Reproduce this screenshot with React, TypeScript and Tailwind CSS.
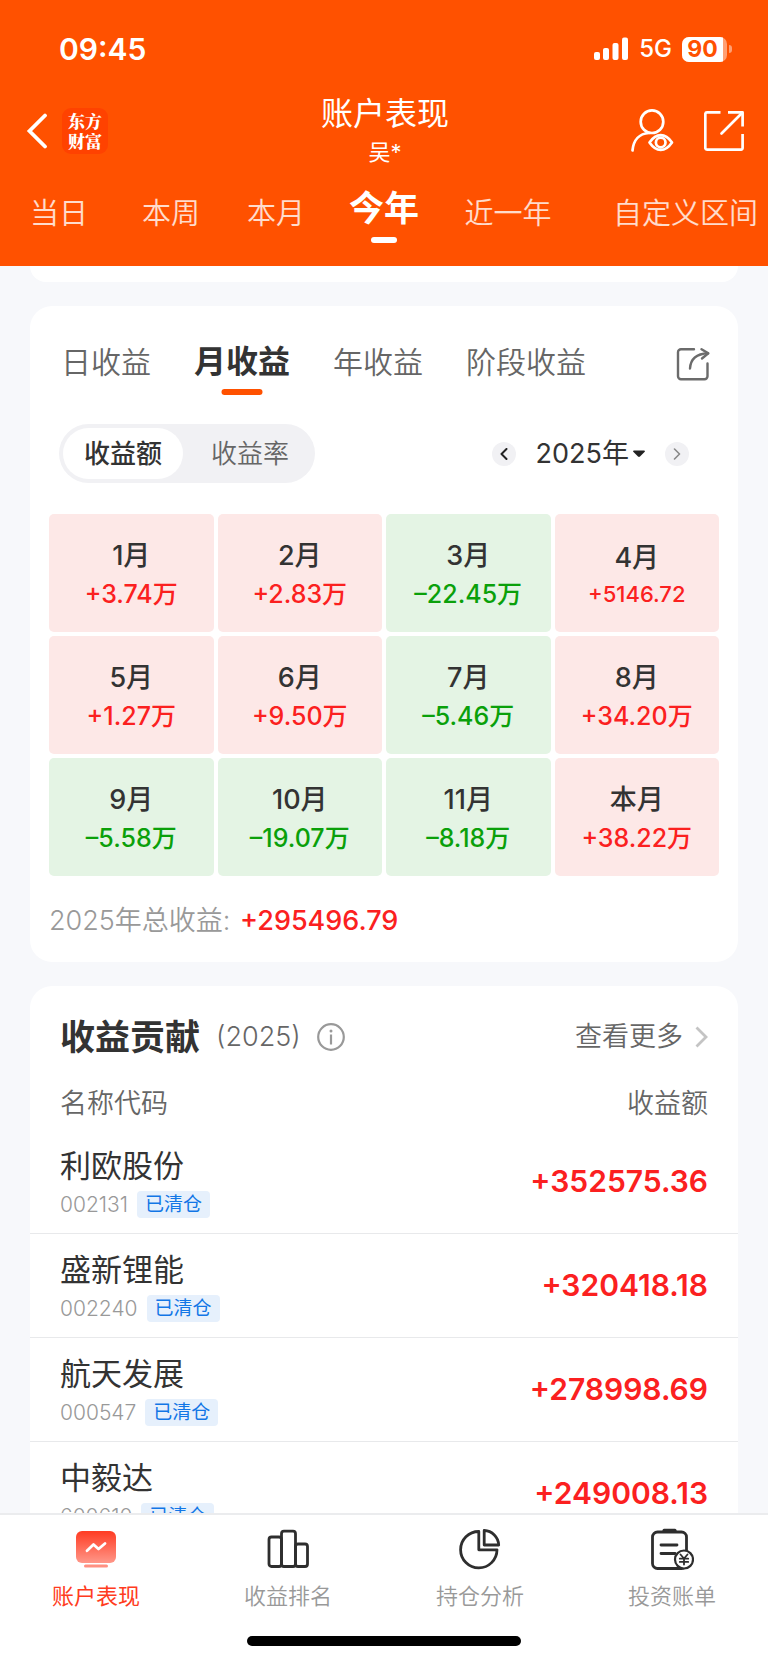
import { useState } from 'react';
import type { ReactNode } from 'react';

const ranges = ['当日', '本周', '本月', '今年', '近一年', '自定义区间'];
const periods = ['日收益', '月收益', '年收益', '阶段收益'];

const months = [
  { label: '1月', value: '+3.74万' },
  { label: '2月', value: '+2.83万' },
  { label: '3月', value: '–22.45万' },
  { label: '4月', value: '+5146.72' },
  { label: '5月', value: '+1.27万' },
  { label: '6月', value: '+9.50万' },
  { label: '7月', value: '–5.46万' },
  { label: '8月', value: '+34.20万' },
  { label: '9月', value: '–5.58万' },
  { label: '10月', value: '–19.07万' },
  { label: '11月', value: '–8.18万' },
  { label: '本月', value: '+38.22万' },
];

const stocks = [
  { name: '利欧股份', code: '002131', amount: '+352575.36' },
  { name: '盛新锂能', code: '002240', amount: '+320418.18' },
  { name: '航天发展', code: '000547', amount: '+278998.69' },
  { name: '中毅达', code: '600610', amount: '+249008.13' },
];

function StatusBar() {
  return (
    <div className="flex h-[93px] items-center justify-between pl-[59px] pr-9 pt-[5px]">
      <span className="text-[30px] font-semibold leading-9">09:45</span>
      <div className="flex items-center">
        <svg className="mr-[10px] h-6 w-[35px]" viewBox="0 0 35 24" fill="currentColor" aria-hidden="true">
          <rect x="0" y="15" width="6" height="8" rx="2" />
          <rect x="9" y="11" width="6" height="12" rx="2" />
          <rect x="18.500" y="6" width="6" height="17" rx="2" />
          <rect x="28" y="0.500" width="6" height="22.500" rx="2" />
        </svg>
        <span className="mr-[10px] text-[24px] font-medium leading-8">5G</span>
        <span className="flex h-[25px] w-[45px] overflow-hidden rounded-[7px] bg-white/45">
          <span className="flex w-[41px] items-center justify-center bg-white text-[23px] font-bold leading-6 text-[#ff5100]">
            90
          </span>
        </span>
        <span className="ml-0.5 h-2 w-[3px] rounded-r-full bg-white/45" />
      </div>
    </div>
  );
}

function Header() {
  const [active, setActive] = useState('今年');
  return (
    <header className="shrink-0 bg-[#ff5100] text-white">
      <StatusBar />
      <div className="grid h-[76px] grid-cols-[1fr_auto_1fr] items-center pl-[26px] pr-6">
        <div className="flex items-center gap-[14px]">
          <button type="button" aria-label="返回">
            <svg className="h-9 w-[22px]" viewBox="0 0 22 36" fill="none" stroke="currentColor" strokeWidth="3.800" strokeLinecap="round" aria-hidden="true">
              <path d="M19 2.500L3.500 18L19 33.500" />
            </svg>
          </button>
          <a href="#home" className="flex size-[46px] flex-col items-center justify-center rounded-[9px] bg-[#ff4200] font-['Noto_Serif_CJK_SC','Noto_Sans_CJK_SC',sans-serif] text-[17px] font-black leading-5">
            <span>东方</span>
            <span>财富</span>
          </a>
        </div>
        <div className="flex flex-col items-center">
          <h1 className="text-[32px] font-normal leading-[42px]">账户表现</h1>
          <p className="text-[22px] leading-[34px]">吴*</p>
        </div>
        <div className="flex items-center justify-end gap-[30px]">
          <button type="button" aria-label="账户">
            <svg className="size-11" viewBox="0 0 44 44" fill="none" stroke="currentColor" strokeWidth="2.700" strokeLinecap="round" strokeLinejoin="round" aria-hidden="true">
              <circle cx="22" cy="12.700" r="11.300" />
              <path d="M2.500 41.500C3.500 31 9.500 24.500 19 24" />
              <path d="M19.500 33.500C23 28.500 26.500 26.200 30.700 26.200S38.500 28.500 42 33.500C38.500 38.600 35 40.900 30.700 40.900S23 38.600 19.500 33.500Z" />
              <circle cx="30.700" cy="33.500" r="4.800" />
            </svg>
          </button>
          <button type="button" aria-label="分享">
            <svg className="size-10" viewBox="0 0 40 40" fill="none" stroke="currentColor" strokeWidth="2.700" strokeLinejoin="round" aria-hidden="true">
              <path d="M16.500 1.400H3A1.700 1.700 0 0 0 1.300 3V37A1.700 1.700 0 0 0 3 38.600H37A1.700 1.700 0 0 0 38.600 37V23" />
              <path d="M24 1.400H38.600V15.500" />
              <path d="M38 2L17.500 22.500" strokeLinecap="round" />
            </svg>
          </button>
        </div>
      </div>
      <nav className="grid h-[97px] grid-cols-[118fr_106fr_104fr_112fr_136fr_192fr] pb-[23px]">
        {ranges.map((range) => (
          <button
            key={range}
            type="button"
            onClick={() => setActive(range)}
            className="flex flex-col items-center justify-end whitespace-nowrap last:items-end last:pr-[10px]"
          >
            {active === range ? (
              <>
                <span className="text-[35px] font-bold leading-[58px]">{range}</span>
                <span className="h-1.5 w-[26px] rounded-full bg-white" />
              </>
            ) : (
              <span className="text-[29px] font-[350] leading-[58px] text-white/80">{range}</span>
            )}
          </button>
        ))}
      </nav>
    </header>
  );
}

function MonthCell({ label, value }: { label: string; value: string }) {
  const gain = value.startsWith('+');
  const short = value.endsWith('万');
  return (
    <div className={`flex h-[118px] flex-col items-center justify-center rounded-[5px] pt-[3px] ${gain ? 'bg-[#fde8e7]' : 'bg-[#e4f4e4]'}`}>
      <span className="text-[27px] font-medium leading-[38px] text-[#333]">{label}</span>
      <span
        className={`font-medium ${short ? 'text-[25px] leading-[38px]' : 'text-[22px] leading-[34px]'} ${gain ? 'text-[#fb2020]' : 'text-[#0aa00a]'}`}
      >
        {value}
      </span>
    </div>
  );
}

function CalendarCard() {
  const [period, setPeriod] = useState('月收益');
  const [mode, setMode] = useState('收益额');
  return (
    <section className="mt-6 rounded-[22px] bg-white px-[19px] pb-[21px]">
      <div className="flex h-[116px] items-center justify-between pl-3 pr-[9px]">
        <div className="flex gap-[43px]">
          {periods.map((item) => (
            <button key={item} type="button" onClick={() => setPeriod(item)} className="relative leading-10">
              {item === period ? (
                <>
                  <span className="text-[32px] font-bold text-[#333]">{item}</span>
                  <span className="absolute -bottom-2 left-1/2 h-1.5 w-[41px] -translate-x-1/2 rounded-full bg-[#ff5100]" />
                </>
              ) : (
                <span className="text-[30px] font-[350] text-[#666]">{item}</span>
              )}
            </button>
          ))}
        </div>
        <button type="button" aria-label="分享收益">
          <svg className="size-[34px]" viewBox="0 0 34 34" fill="none" stroke="#6b6b6b" strokeWidth="2.400" strokeLinecap="round" strokeLinejoin="round" aria-hidden="true">
            <path d="M18 2.200H5A3 3 0 0 0 2 5.200V29.200A3 3 0 0 0 5 32.200H28.500A3 3 0 0 0 31.500 29.200V16.500" />
            <path d="M14 21.500C14.500 13 20 6.800 32 6.300" />
            <path d="M25.500 2.200L32.300 6.300L26 11.500" />
          </svg>
        </button>
      </div>
      <div className="mt-0.5 flex items-center justify-between pl-[10px] pr-[30px]">
        <div className="flex h-[59px] items-center rounded-full bg-[#f1f1f4] p-1 pr-2">
          {['收益额', '收益率'].map((item) => (
            <button
              key={item}
              type="button"
              onClick={() => setMode(item)}
              className={`h-[51px] rounded-full text-[26px] ${mode === item ? 'w-[120px] bg-white font-medium text-[#333]' : 'w-[124px] pl-2.5 font-[350] text-[#666]'}`}
            >
              {item}
            </button>
          ))}
        </div>
        <div className="flex items-center">
          <button type="button" aria-label="上一年" className="flex size-6 items-center justify-center rounded-full bg-[#f1f1f4]">
            <svg className="h-3 w-2" viewBox="0 0 8 12" fill="none" stroke="#222" strokeWidth="2" strokeLinecap="round" strokeLinejoin="round" aria-hidden="true">
              <path d="M6.500 1L1.500 6L6.500 11" />
            </svg>
          </button>
          <button type="button" className="ml-5 flex items-center gap-1 text-[27px] leading-10 text-[#333]">
            2025年
            <svg className="h-2 w-3" viewBox="0 0 12 8" fill="#222" aria-hidden="true">
              <path d="M1 0.500H11Q12.500 0.700 11.500 2L7 6.500Q6 7.400 5 6.500L0.500 2Q-0.500 0.700 1 0.500Z" />
            </svg>
          </button>
          <button type="button" aria-label="下一年" className="ml-5 flex size-6 items-center justify-center rounded-full bg-[#f1f1f4]">
            <svg className="h-3 w-2" viewBox="0 0 8 12" fill="none" stroke="#888" strokeWidth="1.600" strokeLinecap="round" strokeLinejoin="round" aria-hidden="true">
              <path d="M1.500 1L6.500 6L1.500 11" />
            </svg>
          </button>
        </div>
      </div>
      <div className="mt-[31px] grid grid-cols-4 gap-1">
        {months.map((month) => (
          <MonthCell key={month.label} label={month.label} value={month.value} />
        ))}
      </div>
      <p className="mt-[25px] text-[27px] font-[350] leading-10 text-[#999]">
        2025年总收益: <span className="ml-0.5 font-medium text-[#fb2020]">+295496.79</span>
      </p>
    </section>
  );
}

function ContributionCard() {
  return (
    <section className="mt-6 rounded-t-[22px] bg-white">
      <div className="flex h-[92px] items-center justify-between px-[30px] pt-[10px]">
        <div className="flex items-center">
          <h2 className="text-[35px] font-bold leading-[50px] text-[#333]">收益贡献</h2>
          <span className="ml-4 text-[27px] font-[350] leading-10 text-[#666]">(2025)</span>
          <button type="button" aria-label="说明" className="ml-4">
            <svg className="size-7" viewBox="0 0 28 28" fill="none" stroke="#999" strokeWidth="2.200" aria-hidden="true">
              <circle cx="14" cy="14" r="12.800" />
              <path d="M14 11.500V21.500" />
              <circle cx="14" cy="8" r="1.500" fill="#999" stroke="none" />
            </svg>
          </button>
        </div>
        <a href="#more" className="flex items-center gap-3 text-[27px] font-[350] leading-10 text-[#666]">
          查看更多
          <svg className="h-[22px] w-[13px]" viewBox="0 0 13 22" fill="none" stroke="#c4c4c4" strokeWidth="2.800" aria-hidden="true">
            <path d="M1.500 1.500L11 11L1.500 20.500" />
          </svg>
        </a>
      </div>
      <table className="w-full border-separate border-spacing-0">
        <thead>
          <tr className="h-[52px] text-[27px] leading-10 text-[#666]">
            <th scope="col" className="py-0 pl-[30px] text-left font-[350]">名称代码</th>
            <th scope="col" className="py-0 pr-[30px] text-right font-[350]">收益额</th>
          </tr>
        </thead>
        <tbody>
          {stocks.map((stock) => (
            <tr key={stock.code} className="h-[104px]">
              <td className="border-b border-[#e8e9eb] pb-[15px] pl-[30px] pt-4 align-top">
                <div className="text-[31px] leading-10 text-[#333]">{stock.name}</div>
                <div className="mt-[5px] flex h-[27px] items-center gap-[9px]">
                  <span className="text-[21px] font-[350] leading-[27px] text-[#999]">{stock.code}</span>
                  <span className="rounded bg-[#e6f0fc] px-2 text-[19px] leading-[27px] text-[#1276e6]">已清仓</span>
                </div>
              </td>
              <td className="border-b border-[#e8e9eb] py-0 pr-[30px] text-right text-[30px] font-semibold text-[#fb2020]">
                {stock.amount}
              </td>
            </tr>
          ))}
        </tbody>
      </table>
    </section>
  );
}

function TabItem({ label, active, children }: { label: string; active?: boolean; children: ReactNode }) {
  return (
    <a href={`#${label}`} className={`flex flex-col items-center gap-2 ${active ? 'text-[#ff3b20]' : 'text-[#999]'}`}>
      <svg className="size-11" viewBox="0 0 44 44" fill="none" stroke="#2e2e2e" strokeWidth="2.800" strokeLinejoin="round" aria-hidden="true">
        {children}
      </svg>
      <span className={`text-[22px] leading-[34px] ${active ? 'font-normal' : 'font-[350]'}`}>{label}</span>
    </a>
  );
}

function BottomBar() {
  return (
    <nav className="shrink-0 border-t-2 border-[#ebecee] bg-white pb-[17px] pt-3">
      <div className="grid grid-cols-4">
        <TabItem label="账户表现" active>
          <defs>
            <linearGradient id="screen" x1="0" y1="0" x2="0" y2="1">
              <stop offset="0" stopColor="#ff3b22" />
              <stop offset="1" stopColor="#ff9789" />
            </linearGradient>
          </defs>
          <rect x="2" y="4" width="40" height="32" rx="6" fill="url(#screen)" stroke="none" />
          <rect x="10" y="37.500" width="24" height="3" rx="1.500" fill="#ff9081" stroke="none" />
          <path d="M13 23.700L19.500 17.500L24.500 22L31 16.500" stroke="#fff" strokeWidth="2.800" strokeLinecap="round" />
        </TabItem>
        <TabItem label="收益排名">
          <rect x="3" y="10" width="12.500" height="29.500" rx="2.500" />
          <rect x="15.500" y="4.200" width="14" height="35.300" rx="2.500" />
          <rect x="29.500" y="17" width="12" height="22.500" rx="2.500" />
        </TabItem>
        <TabItem label="持仓分析">
          <path d="M20.800 4.500V22.800H39A18.200 18.200 0 1 1 20.800 4.500Z" />
          <path d="M26.200 3.500A15 15 0 0 1 40.700 18H26.200Z" />
        </TabItem>
        <TabItem label="投资账单">
          <rect x="2.500" y="5" width="34" height="36.500" rx="5" />
          <path d="M14 3.200H25" strokeWidth="3" strokeLinecap="round" />
          <path d="M11 18H27M11 26.500H25" strokeLinecap="round" />
          <circle cx="34" cy="32.500" r="9" fill="#fff" strokeWidth="2.200" />
          <path d="M30.500 27.500L34 31.500L37.500 27.500M34 31.500V37.500M29.800 31.700H38.200M29.800 34.900H38.200" strokeWidth="1.800" strokeLinecap="round" />
        </TabItem>
      </div>
      <div className="mx-auto mt-[23px] h-[10px] w-[274px] rounded-full bg-black" />
    </nav>
  );
}

export default function App() {
  return (
    <div className="flex h-screen flex-col bg-[#f7f8fb] font-['Inter','Noto_Sans_CJK_SC',sans-serif]">
      <Header />
      <main className="min-h-0 flex-1 overflow-y-auto px-[30px] [scrollbar-width:none]">
        <div className="h-4 rounded-b-[22px] bg-white" />
        <CalendarCard />
        <ContributionCard />
      </main>
      <BottomBar />
    </div>
  );
}
